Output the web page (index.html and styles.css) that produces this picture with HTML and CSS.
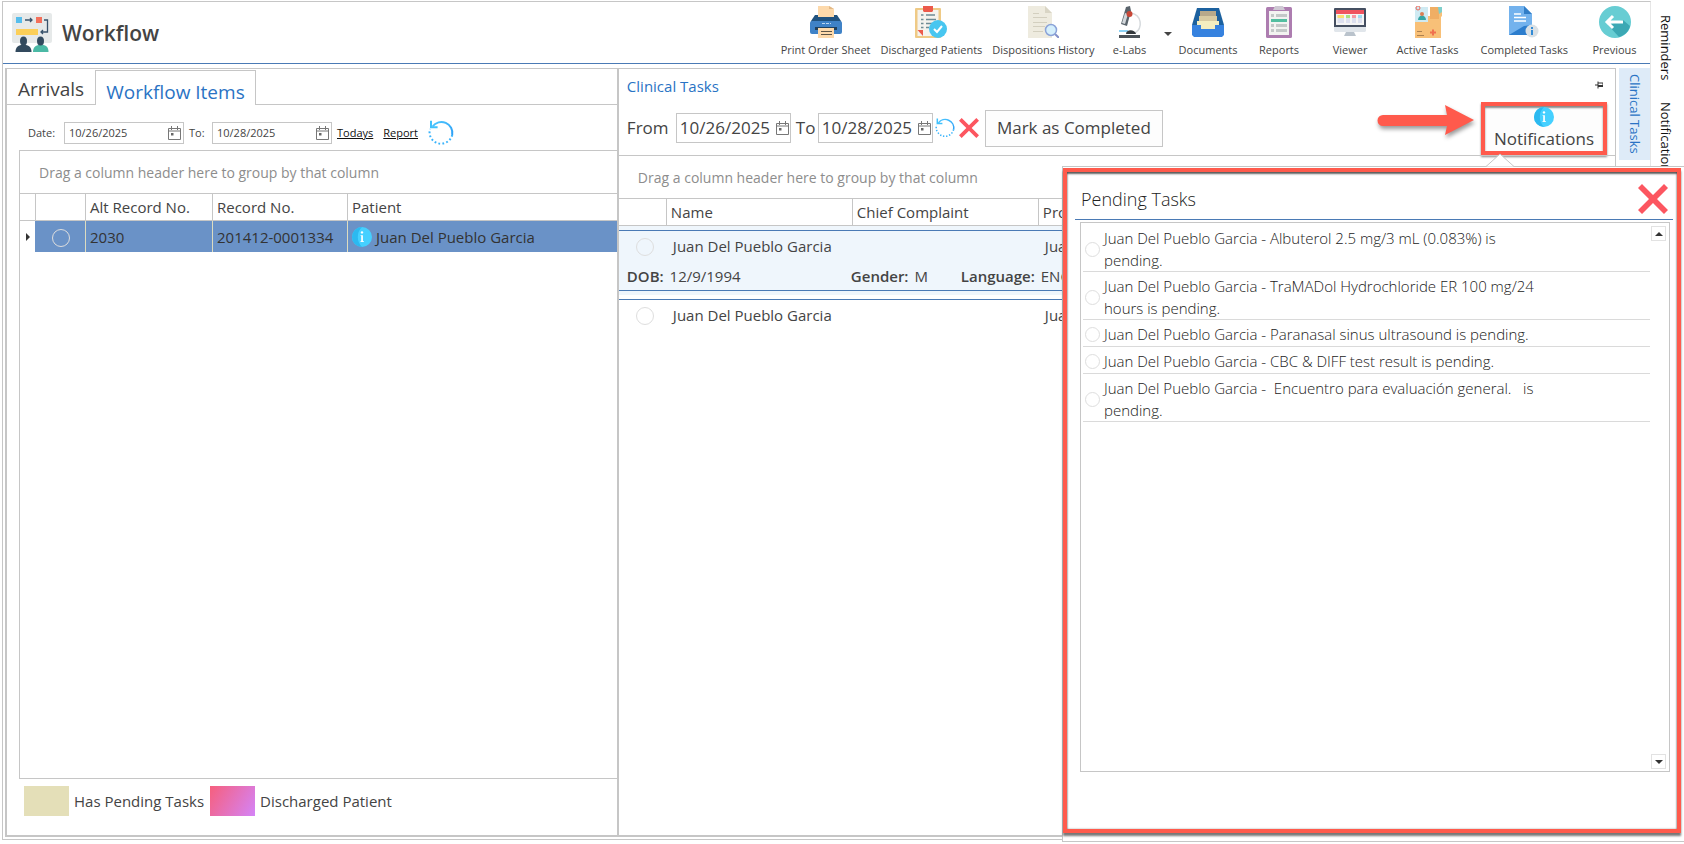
FILE: index.html
```html
<!DOCTYPE html>
<html lang="en">
<head>
<meta charset="utf-8">
<title>Workflow</title>
<link rel="stylesheet" href="styles.css">
</head>
<body>
<svg class="defs" aria-hidden="true">
  <defs>
    <linearGradient id="sky" x1="0" y1="0" x2="1" y2="1"><stop offset="0" stop-color="#4cc6ff"/><stop offset="1" stop-color="#2e9ff5"/></linearGradient>
    <symbol id="info" viewBox="0 0 20 20"><circle cx="10" cy="10" r="10" fill="#45d0ff"/><path d="M10 0a10 10 0 0 0 0 20 14 14 0 0 1 0-20z" fill="#2cb9f0"/><circle cx="10" cy="5.4" r="1.2" fill="#fff"/><path d="M8.6 8.2h2.3v6H12v.9H8.4v-.9h.8V9.100h-.6z" fill="#fff"/></symbol>
    <symbol id="refresh" viewBox="0 0 26 26"><path d="M4.500 6.500A11 11 0 0 1 24.200 15" fill="none" stroke="url(#sky)" stroke-width="2"/><path d="M24.200 15A11.500 11.500 0 1 1 2 9" fill="none" stroke="#38b3fb" stroke-width="2" stroke-dasharray="1.800 2.200"/><path d="M3 .8v6.400h6.600" fill="none" stroke="#41c1fc" stroke-width="2"/></symbol>
    <symbol id="cross" viewBox="0 0 30 30"><path d="M4 0 15 11 26 0 30 4 19 15 30 26 26 30 15 19 4 30 0 26 11 15 0 4z" fill="#fc5660"/></symbol>
    <symbol id="cal" viewBox="0 0 13 14"><path d="M.5 2.500h12v11H.5zM.5 5h12M3.500 0v4M9.500 0v4" fill="none" stroke="#777"/><path d="M3 7h2.500v2.500H3z" fill="#666"/></symbol>
  </defs>
</svg>
<div class="shell">
  <div class="app">
    <header class="header">
      <svg class="logo" viewBox="0 0 40 40"><rect width="40" height="30" rx="2" fill="#e6e9e9"/><path d="M4 4h6v6H4z" fill="#55bdec"/><path d="M24 4h6v6h-6z" fill="#f3705b"/><path d="M4 16h22v6H4z" fill="#fccf58"/><path d="M13 7h7M18 5l2 2-2 2M32 7h3.500v12H29M31 17l-2 2 2 2" fill="none" stroke="#38526b" stroke-width="1.300"/><path d="M3.500 39c0-5 3-7 8-7.500 5 .5 8 2.500 8 7.500z" fill="#324a5e"/><path d="M21 39c0-5 3-7 8-7.500 5 .5 7.500 2.500 7.500 7.500z" fill="#4bb9a5"/><ellipse cx="11.500" cy="28" rx="3.500" ry="4.500" fill="#324a5e"/><ellipse cx="28.500" cy="28" rx="3.500" ry="4.500" fill="#324a5e"/></svg>
      <h1>Workflow</h1>
      <nav class="tools">
        <button class="tool"><svg viewBox="0 0 32 32"><path d="M5 9h22l4 6v4H1v-4z" fill="#20527f"/><rect y="15" width="32" height="13" rx="2" fill="#3f82c7"/><path d="M8 0h11l5 3v8H8z" fill="#fdd9ab"/><path d="M19 0v3h5z" fill="#e2b987"/><path d="M5 21h22v3H5z" fill="#20415f"/><path d="M8 22h16v10H8z" fill="#fdd9ab"/><path d="M11 25.500h11M11 28.500h11" stroke="#5d5548"/><path d="M12 17.500h9" stroke="#bcd7f1" stroke-dasharray="3 1"/></svg><span>Print Order Sheet</span></button>
        <button class="tool"><svg viewBox="0 0 32 32"><rect y="2" width="26" height="30" rx="1" fill="#efca86"/><path d="M2.500 4h21v26h-21z" fill="#f5f3ee"/><path d="M8 0h10v5l-1 1H9L8 5z" fill="#ec5a4b"/><path d="M6 9h2.500M11 9h9M6 13.500h2.500M11 13.500h10M6 17.500h2.500M11 17.500h6M6 21.500h2.500M11 21.500h3" stroke="#6f8b94" stroke-width="1.700"/><path d="M2.500 24H8v6z" fill="#ec5a4b"/><circle cx="23" cy="23" r="9" fill="#48c6f0"/><path d="m19 23 3 3 5-6" fill="none" stroke="#fff" stroke-width="2"/></svg><span>Discharged Patients</span></button>
        <button class="tool"><svg viewBox="0 0 32 32"><path d="M1 0h17l7 7v25H1z" fill="#eeebdf"/><path d="m18 0 7 7h-7z" fill="#d9d5c5"/><path d="M6 7.500h6M6 11.500h14M6 16.500h14M6 20.500h12M6 25.500h10" stroke="#d3cfbf"/><path d="m28 28 4 4" stroke="#8490c8" stroke-width="2"/><circle cx="24" cy="24" r="5.500" fill="#d5effc" stroke="#8ba3d8" stroke-width="1.500"/></svg><span>Dispositions History</span></button>
        <button class="tool narrow"><svg viewBox="0 0 32 32"><path d="M17 7c11 2 12 15 4 20" fill="none" stroke="#d6dadd" stroke-width="1.500"/><path d="m12 1 4-1 1 5-4 15-6-2z" fill="#59636b"/><path d="m11 7 3 1-3 10-3-1z" fill="#d3d8dc"/><circle cx="15.500" cy="8" r="3" fill="#c84737"/><path d="M5 25h9" stroke="#67c3f2" stroke-width="1.500"/><path d="M12 28c0-5 9-5 10 0z" fill="#33383c"/><path d="M5 29h21v3H5z" fill="#4b5258"/></svg><span>e-Labs</span></button>
        <svg class="caret" viewBox="0 0 8 4"><path d="M0 0h8L4 4z" fill="#444"/></svg>
        <button class="tool"><svg viewBox="0 0 32 32"><path d="M5 2h22l5 17v4H0v-4z" fill="#1c619f"/><path d="M8 5h16v6H8z" fill="#b7a98a"/><path d="M7 10h18v8H7z" fill="#d8cba2"/><path d="M5 15h22v8H5z" fill="#f4eec0"/><path d="M0 19h9v4h14v-4h9v10l-2 2H2l-2-2z" fill="#3682df"/></svg><span>Documents</span></button>
        <button class="tool"><svg viewBox="0 0 32 32"><rect x="3" y="1" width="26" height="31" rx="1.500" fill="#ad7db0"/><path d="M6 5h20v24H6z" fill="#f2f3f1"/><path d="M12 0h8l2 4H10z" fill="#cfc9d4"/><path d="M8 9.500h3M13 9.500h11M8 19.500h3M13 19.500h11M8 24.500h3M13 24.500h11" stroke="#c3c8c8" stroke-width="3"/><path d="M8 13h16v3H8z" fill="#53bea0"/></svg><span>Reports</span></button>
        <button class="tool"><svg viewBox="0 0 32 32"><rect y="2" width="32" height="22" rx="1" fill="#454f61"/><path d="M2 4h28v15H2z" fill="#f5f5f5"/><path d="M2 4h28v4H2z" fill="#f0535f"/><path d="M0 21h32v4l-1 1H1l-1-1z" fill="#e1e6eb"/><path d="M3.500 9H10v8H3.500z" fill="#dde0ef"/><path d="M12 9h4v8h-4zM18 9h4v8h-4zM24 9h4v8h-4z" fill="#dde0ef"/><path d="M3.500 9H10v3H3.500z" fill="#fbdf72"/><path d="M12 9h4v3h-4z" fill="#a9df82"/><path d="M18 9h4v3h-4z" fill="#f59aa5"/><path d="M24 9h4v3h-4z" fill="#9fdcf3"/><path d="M12 26h8l2 4H10z" fill="#bac3cc"/></svg><span>Viewer</span></button>
        <button class="tool wide"><svg viewBox="0 0 32 32"><path d="M3 10h15V1h12v9l-1 1v21H3z" fill="#f8c078"/><path d="M18 1h9v12h-9z" fill="#f0ae64"/><path d="M26 1h4v5l-3 2z" fill="#7fcfcb"/><path d="M3 1h13v15H3z" fill="#cfeaf2"/><path d="M6 14c0-6 8-6 8 0z" fill="#35a6a5"/><circle cx="10" cy="8" r="2" fill="#d97f55"/><circle cx="6" cy="2" r="2" fill="none" stroke="#e9685a"/><path d="M5 25.500h5M5 29.500h7" stroke="#ad8150"/><path d="M18 26.500h6M21 23.500v6" stroke="#f0714f" stroke-width="2"/></svg><span>Active Tasks</span></button>
        <button class="tool wide"><svg viewBox="0 0 32 32"><path d="M1 0h15l8 8v21H1z" fill="#73b2ed"/><path d="m16 0 8 8h-8z" fill="#327ec7"/><path d="M6 8h7M6 11.500h12M6 15h12" stroke="#fff" stroke-width="1.500"/><path d="M1 29 16 20l8-1v10z" fill="#2c7dcd"/><circle cx="24" cy="25" r="6.500" fill="#d9e0e5"/><path d="M24 24v5M24 21v2" stroke="#318bd6" stroke-width="2"/></svg><span>Completed Tasks</span></button>
        <button class="tool"><svg viewBox="0 0 32 32"><circle cx="16" cy="16" r="16" fill="#67cdd3"/><path d="m9 19 11 12c6-2 10-6 11-11l-7-6z" fill="#3ca8b4"/><path d="M24 16H9M14 10l-6 6 6 6" fill="none" stroke="#fff" stroke-width="3"/></svg><span>Previous</span></button>
      </nav>
    </header>
    <main class="body">
      <div class="panels">
        <section class="left">
          <div class="tabs" role="tablist"><button class="tab" role="tab">Arrivals</button><button class="tab active" role="tab" aria-selected="true">Workflow Items</button></div>
          <div class="filters">
            <label for="d1">Date:</label><div class="date"><input id="d1" value="10/26/2025"><svg><use href="#cal"/></svg></div>
            <label for="d2">To:</label><div class="date"><input id="d2" value="10/28/2025"><svg><use href="#cal"/></svg></div>
            <a href="#">Todays</a><a href="#" class="report">Report</a>
            <button class="bare" aria-label="Refresh"><svg class="ref"><use href="#refresh"/></svg></button>
          </div>
          <div class="grid">
            <div class="group">Drag a column header here to group by that column</div>
            <table class="records">
              <colgroup><col class="c-mark"><col class="c-check"><col class="c-alt"><col class="c-rec"><col></colgroup>
              <thead><tr><th></th><th></th><th>Alt Record No.</th><th>Record No.</th><th>Patient</th></tr></thead>
              <tbody><tr><td class="mark"><svg viewBox="0 0 4 8"><path d="M0 0v8l4-4z" fill="#333"/></svg></td><td class="pick"><input type="radio" name="rec" aria-label="Select record 2030"></td><td>2030</td><td>201412-0001334</td><td><div class="patient"><svg><use href="#info"/></svg>Juan Del Pueblo Garcia</div></td></tr></tbody>
            </table>
          </div>
          <div class="legend"><i class="sw pending"></i><span>Has Pending Tasks</span><i class="sw gone"></i><span>Discharged Patient</span></div>
        </section>
        <section class="right">
          <div class="caption"><h2>Clinical Tasks</h2><svg viewBox="0 0 8 8"><path d="M0 4h3M3 .5v7M3 2h5v3.500H3" fill="none" stroke="#333"/><path d="M3 4h5v2H3z" fill="#333"/></svg></div>
          <div class="taskbar">
            <label for="d3">From</label><div class="date big"><input id="d3" value="10/26/2025"><svg><use href="#cal"/></svg></div>
            <label for="d4">To</label><div class="date big"><input id="d4" value="10/28/2025"><svg><use href="#cal"/></svg></div>
            <button class="bare" aria-label="Refresh"><svg class="s20"><use href="#refresh"/></svg></button>
            <button class="bare" aria-label="Clear"><svg class="s20"><use href="#cross"/></svg></button>
            <button class="complete">Mark as Completed</button>
            <div class="notify-wrap">
              <svg class="arrow" viewBox="0 0 100 36"><path d="M7 11h64L69 1l29 15-29 15 2-9H7a5.500 5.500 0 0 1 0-11z" fill="#ff5a4c"/></svg>
              <button class="notify"><svg><use href="#info"/></svg>Notifications</button>
            </div>
          </div>
          <div class="tasks">
            <div class="group">Drag a column header here to group by that column</div>
            <table class="clinical">
              <colgroup><col class="k-check"><col class="k-name"><col class="k-name"><col></colgroup>
              <thead><tr><th></th><th>Name</th><th>Chief Complaint</th><th>Prov.</th></tr></thead>
              <tbody>
                <tr class="gap sel"><td colspan="4"></td></tr>
                <tr class="item sel"><td class="pick"><input type="radio" name="task" aria-label="Select task 1"></td><td colspan="2">Juan Del Pueblo Garcia</td><td>Juan</td></tr>
                <tr class="detail sel"><td colspan="4"><div class="facts"><span class="dob"><b>DOB:</b> 12/9/1994</span><span class="gender"><b>Gender:</b> M</span><span><b>Language:</b> ENG</span></div></td></tr>
                <tr class="gap sel"><td colspan="4"></td></tr>
                <tr class="gap"><td colspan="4"></td></tr>
                <tr class="item next"><td class="pick"><input type="radio" name="task" aria-label="Select task 2"></td><td colspan="2">Juan Del Pueblo Garcia</td><td>Juan</td></tr>
              </tbody>
            </table>
          </div>
        </section>
      </div>
      <button class="sidetab">Clinical Tasks</button>
    </main>
  </div>
  <aside class="rail"><button>Reminders</button><button>Notifications</button></aside>
</div>
<section class="popup">
  <svg class="beak" viewBox="0 0 28 14"><path d="M0 13.500 14 1l14 12.500" fill="#fff" stroke="#c6c6c6"/></svg>
  <div class="frame">
    <div class="pop-head"><h2>Pending Tasks</h2><button class="bare" aria-label="Close"><svg class="close"><use href="#cross"/></svg></button></div>
    <div class="listbox">
      <ul>
        <li><label><input type="radio" name="p"><span>Juan Del Pueblo Garcia - Albuterol 2.5 mg/3 mL (0.083%) is<br>pending.</span></label></li>
        <li><label><input type="radio" name="p"><span>Juan Del Pueblo Garcia - TraMADol Hydrochloride ER 100 mg/24<br>hours is pending.</span></label></li>
        <li><label><input type="radio" name="p"><span>Juan Del Pueblo Garcia - Paranasal sinus ultrasound is pending.</span></label></li>
        <li><label><input type="radio" name="p"><span>Juan Del Pueblo Garcia - CBC &amp; DIFF test result is pending.</span></label></li>
        <li><label><input type="radio" name="p"><span>Juan Del Pueblo Garcia -&nbsp; Encuentro para evaluación general. &nbsp; is<br>pending.</span></label></li>
      </ul>
      <div class="scroll"><button aria-label="Scroll up"><svg viewBox="0 0 8 4"><path d="M0 4h8L4 0z" fill="#333"/></svg></button><button aria-label="Scroll down"><svg viewBox="0 0 8 4"><path d="M0 0h8L4 4z" fill="#333"/></svg></button></div>
    </div>
  </div>
</section>
</body>
</html>
```
FILE: styles.css
```css
* { box-sizing: border-box; }
body { margin: 0; background: #fff; color: #444; font: 15px/20px "Open Sans", "Noto Sans", sans-serif; }
button, input { font: inherit; color: inherit; }
button { background: none; border: 0; padding: 0; white-space: nowrap; }
h1, h2 { margin: 0; font-weight: 400; }
svg { display: block; flex: none; }
.defs { position: absolute; width: 0; height: 0; }
.shell { display: flex; height: 100vh; padding: 1px 0 4px 2px; overflow: hidden; }
.app { flex: 1; min-width: 0; display: flex; flex-direction: column; border: 1px solid #c6c6c6; border-right-color: #e6e6e6; }
.header { display: flex; align-items: center; height: 62px; padding: 0 0 0 9px; border-bottom: 1px solid #4a7ab5; }
.logo { width: 40px; height: 40px; margin-right: 10px; }
.header h1 { font-size: 21px; font-weight: 600; line-height: 28px; }
.tools { display: flex; align-items: flex-start; margin-left: auto; height: 100%; padding-top: 4px; font-size: 11px; line-height: 16px; }
.tool { display: flex; flex-direction: column; align-items: center; gap: 4px; min-width: 71px; padding: 0 5px; }
.tool.narrow { min-width: 60px; }
.tool.wide { padding: 0 11px; }
.tool svg { width: 32px; height: 32px; }
.caret { width: 8px; height: 4px; margin: 26px 1px 0 4px; }
.body { flex: 1; min-height: 0; display: flex; padding: 4px 0 2px 2px; }
.panels { flex: 1; min-width: 0; display: flex; border: 1px solid #c6c6c6; border-width: 1px 1px 2px 2px; }
.left { flex: 611 1 0; min-width: 0; display: flex; flex-direction: column; border-right: 2px solid #c6c6c6; }
.tabs { display: flex; height: 36px; border-bottom: 1px solid #c6c6c6; font-size: 19px; line-height: 28px; }
.tab { width: 88px; padding-top: 5px; height: 34px; }
.tab.active { width: 161px; height: 35px; margin-top: 1px; padding-top: 7px; border: 1px solid #c6c6c6; border-bottom: 0; color: #2a73c4; background: #fff; }
.filters { display: flex; flex: none; align-items: center; height: 45px; padding: 11px 0 0 21px; font-size: 11px; }
.filters label { width: 36px; }
.filters .date + label { width: 28px; padding-left: 5px; }
.date { display: flex; align-items: center; width: 120px; height: 22px; padding: 0 2px 0 4px; border: 1px solid #c6c6c6; }
.date input { flex: 1; min-width: 0; border: 0; padding: 0; background: none; outline: 0; }
.date svg { width: 13px; height: 14px; }
.filters a { margin-left: 5px; color: #111; text-decoration: underline; }
.filters a.report { margin: 0 10px 0 10px; }
.ref { width: 26px; height: 26px; }
.grid { flex: 1; min-height: 0; margin-left: 12px; border: 1px solid #c6c6c6; border-right: 0; }
.group { height: 43px; padding: 0 19px; font-size: 14px; line-height: 44px; color: #8d8d8d; border-bottom: 1px solid #c6c6c6; }
table { width: 100%; table-layout: fixed; border-collapse: separate; border-spacing: 0; }
th { height: 27px; padding: 0 4px; text-align: left; font-weight: 400; border: 1px solid #c6c6c6; border-width: 0 0 1px 1px; white-space: nowrap; }
th:first-child { border-left: 0; }
td { padding: 0 4px; white-space: nowrap; }
.c-mark { width: 15px; } .c-check { width: 50px; } .c-alt { width: 127px; } .c-rec { width: 135px; }
.records td { height: 31px; background: #6a92c7; border-left: 1px solid #dcdcc0; color: #333; }
.records td.mark { background: #fff; padding: 0 0 0 6px; border: 0; }
.mark svg { width: 4px; height: 8px; }
.patient { display: flex; align-items: center; gap: 4px; }
.patient svg { width: 20px; height: 20px; }
input[type=radio] { appearance: none; flex: none; width: 18px; height: 18px; margin: 0; border: 1px solid #dedede; border-radius: 50%; background: transparent; vertical-align: middle; }
.pick { text-align: center; }
.records .pick { border-left-color: #6a92c7; }
.legend { display: flex; flex: none; align-items: center; height: 56px; padding: 0 0 12px 17px; }
.sw { width: 45px; height: 30px; margin-right: 5px; }
.pending { background: #e4dfb8; }
.gone { margin-left: 6px; background: linear-gradient(120deg, #f65f7d, #d484f8); }
.right { flex: 998 1 0; min-width: 0; display: flex; flex-direction: column; }
.caption { display: flex; justify-content: space-between; align-items: center; height: 35px; padding: 0 12px 2px 8px; }
.caption h2 { color: #2a73c4; font-size: 15px; }
.caption svg { width: 8px; height: 8px; margin-bottom: 1px; }
.taskbar { display: flex; align-items: center; height: 51px; padding: 0 0 3px 8px; font-size: 17px; }
.taskbar label { width: 49px; }
.taskbar .date + label { width: 27px; padding-left: 5px; }
.date.big { width: 115px; height: 30px; padding: 0 1px 0 3px; }
.s20 { width: 20px; height: 20px; margin: 0 2px; }
.complete { height: 37px; width: 178px; margin-left: 4px; border: 1px solid #c6c6c6; background: #fdfdfd; }
.notify-wrap { display: flex; align-items: center; margin-left: auto; padding-right: 8px; }
.arrow { width: 100px; height: 36px; margin-right: 5px; margin-top: -12px; filter: drop-shadow(1px 3px 2px #0006); }
.notify { display: flex; flex-direction: column; align-items: center; width: 126px; height: 53px; padding-top: 1px; border: 4px solid #ff5a4c; background: #fdfdfd; box-shadow: 0 2px 2px #0007, inset 0 2px 2px #0007; line-height: 24px; }
.notify svg { width: 20px; height: 20px; }
.tasks { flex: 1; border-top: 1px solid #c6c6c6; }
.k-check { width: 47px; } .k-name { width: 186px; }
.clinical .item td { height: 34px; padding: 0 0 4px 7px; border-top: 1px solid #4a7ab5; }
.clinical .item td.pick { padding: 0 0 4px 6px; }
.sel td { background: #eff6fc; }
.clinical .detail td { height: 27px; padding: 0 8px 2px; border-bottom: 1px solid #4a7ab5; }
.clinical .gap td { height: 4px; padding: 0; }
.facts { display: flex; }
.facts b { font-weight: 600; margin-right: 2px; }
.dob { width: 224px; } .gender { width: 110px; }
.sidetab { width: 31px; height: 92px; margin-left: 3px; background: #deebf8; color: #2a73c4; writing-mode: vertical-rl; font-size: 13px; }
.rail { display: flex; flex-direction: column; gap: 22px; width: 33px; padding: 14px 4px 0 0; color: #111; font-size: 13px; align-items: center; }
.rail button { writing-mode: vertical-rl; }
.popup { position: absolute; top: 166px; right: 0; bottom: 2px; width: 622px; border: 1px solid #c6c6c6; border-right: 0; background: #fff; font-weight: 300; padding: 1px 3px 8px 0; }
.beak { position: absolute; top: -14px; left: 423px; width: 28px; height: 14px; }
.frame { height: 100%; display: flex; flex-direction: column; padding: 6px 4px 57px 8px; border: 4px solid #ff5a4c; box-shadow: 0 3px 2px #0008, inset 0 2px 2px #0009, inset 0 0 2px #0006; }
.pop-head { display: flex; align-items: center; justify-content: space-between; height: 42px; padding: 0 5px 0 6px; border-bottom: 1px solid #4a7ab5; color: #222; }
.pop-head h2 { font-size: 18px; font-weight: 300; }
.close { width: 30px; height: 30px; }
.listbox { flex: 1; min-height: 0; display: flex; margin: 2px 3px 0 5px; border: 1px solid #c6c6c6; line-height: 22px; }
.listbox ul { flex: 1; margin: 0; padding: 1px 0 0 2px; list-style: none; color: #222; }
.listbox li { min-height: 27px; border-bottom: 1px solid #dadada; padding: 3px 0 0 2px; }
.listbox label { display: flex; align-items: center; gap: 4px; }
.listbox input[type=radio] { width: 15px; height: 15px; }
.scroll { display: flex; flex-direction: column; justify-content: space-between; padding: 3px 3px 2px 1px; }
.scroll button { display: grid; place-items: center; width: 15px; height: 15px; border: 1px solid #e2e2e2; }
.scroll svg { width: 8px; height: 4px; }
```
